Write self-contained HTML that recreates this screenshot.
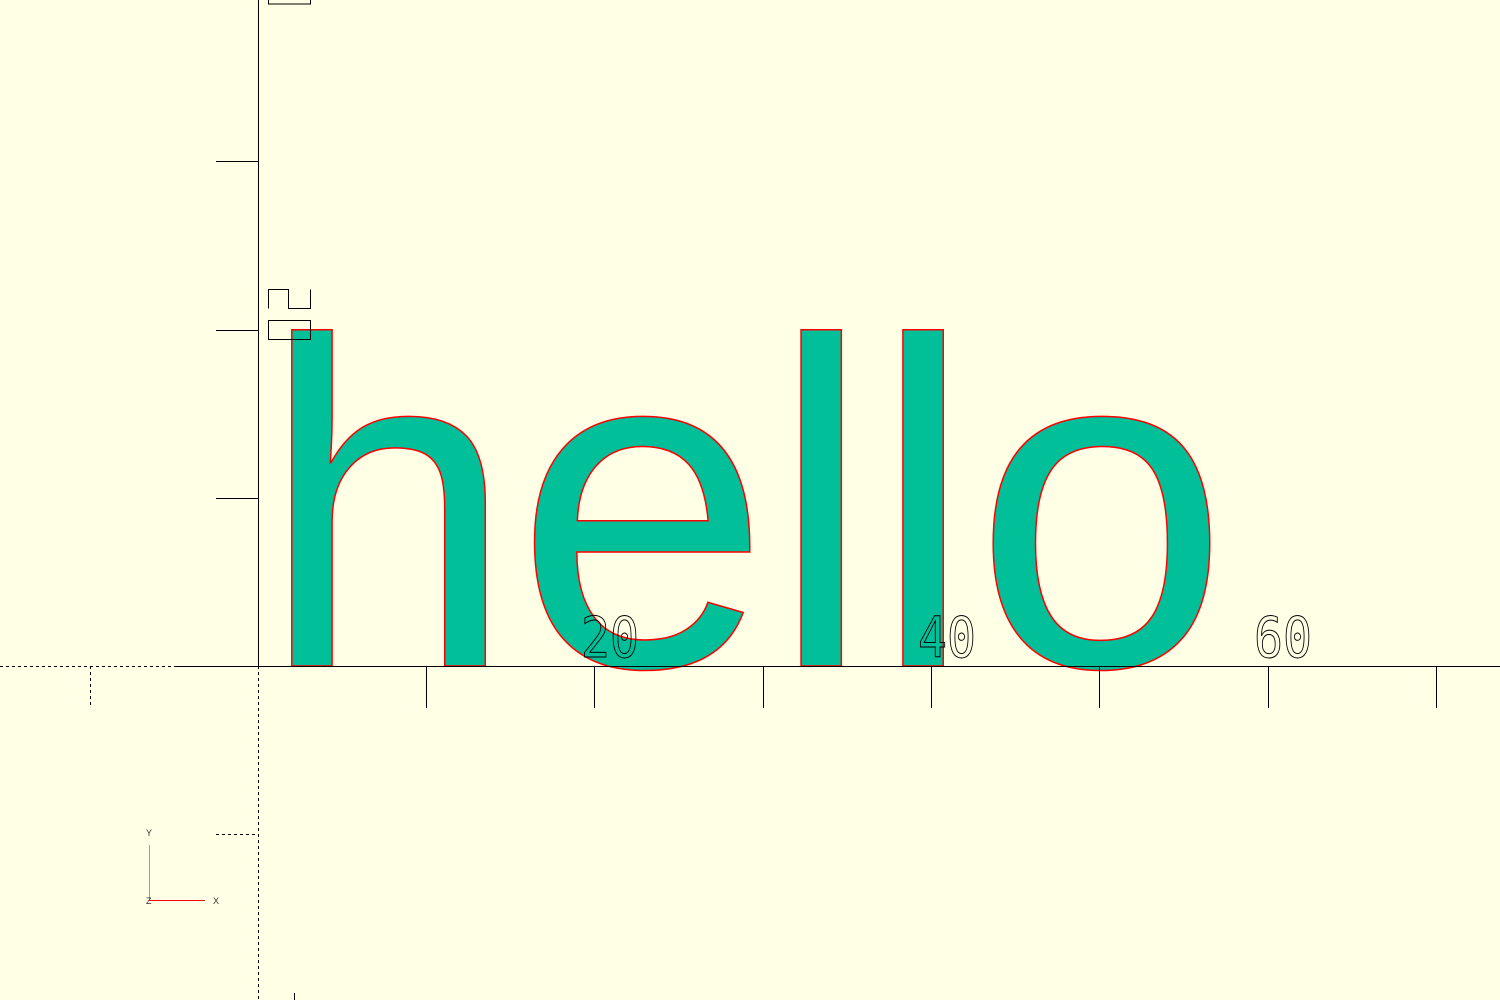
<!DOCTYPE html>
<html><head><meta charset="utf-8"><style>
html,body{margin:0;padding:0;background:#ffffe5;width:1500px;height:1000px;overflow:hidden}
svg{display:block}
</style></head><body>
<svg width="1500" height="1000" viewBox="0 0 1500 1000" xmlns="http://www.w3.org/2000/svg">
<rect width="1500" height="1000" fill="#ffffe5"/>
<text x="260" y="666" font-family="Liberation Sans, sans-serif" font-size="464" fill="#00bf99" stroke="#ff0000" stroke-width="1.5" textLength="969" lengthAdjust="spacingAndGlyphs">hello</text>
<g stroke="#000" stroke-width="1" shape-rendering="crispEdges">
<line x1="258.5" y1="0" x2="258.5" y2="666"/>
<line x1="258.5" y1="666" x2="258.5" y2="1000" stroke-dasharray="3,3"/>
<line x1="175" y1="666.5" x2="1500" y2="666.5"/>
<line x1="0" y1="666.5" x2="175" y2="666.5" stroke-dasharray="3,3"/>
<line x1="426.5" y1="666" x2="426.5" y2="708"/>
<line x1="594.5" y1="666" x2="594.5" y2="708"/>
<line x1="763.5" y1="666" x2="763.5" y2="708"/>
<line x1="931.5" y1="666" x2="931.5" y2="708"/>
<line x1="1099.5" y1="666" x2="1099.5" y2="708"/>
<line x1="1268.5" y1="666" x2="1268.5" y2="708"/>
<line x1="1436.5" y1="666" x2="1436.5" y2="708"/>
<line x1="90.5" y1="666" x2="90.5" y2="708" stroke-dasharray="3,3"/>
<line x1="216" y1="498.5" x2="258" y2="498.5"/>
<line x1="216" y1="330.5" x2="258" y2="330.5"/>
<line x1="216" y1="161.5" x2="258" y2="161.5"/>
<line x1="216" y1="834.5" x2="258" y2="834.5" stroke-dasharray="3,3"/>
<rect x="268.5" y="-5" width="42" height="9" fill="none"/>
<rect x="268.5" y="320.5" width="42" height="19" fill="none"/>
<path d="M268.5 308.5 V289.5 H288.5 V308.5 H310.5 V289.5" fill="none"/>
</g>
<g font-family="DejaVu Sans Mono, monospace" font-size="56" fill="none" stroke="#000" stroke-width="1">
<text x="581" y="657" textLength="58" lengthAdjust="spacingAndGlyphs">20</text>
<text x="918" y="657" textLength="58" lengthAdjust="spacingAndGlyphs">40</text>
<text x="1254" y="657" textLength="58" lengthAdjust="spacingAndGlyphs">60</text>
</g>
<line x1="149.5" y1="845" x2="149.5" y2="900" stroke="#7fb27f" stroke-width="1"/>
<line x1="149" y1="900.5" x2="205" y2="900.5" stroke="#ff0000" stroke-width="1"/>
<g font-family="Liberation Sans, sans-serif" font-size="9" fill="#333">
<text x="146" y="836">Y</text><text x="213" y="904">X</text><text x="146" y="904">Z</text>
</g>
<line x1="294.5" y1="993" x2="294.5" y2="1000" stroke="#000"/>
</svg>
</body></html>
